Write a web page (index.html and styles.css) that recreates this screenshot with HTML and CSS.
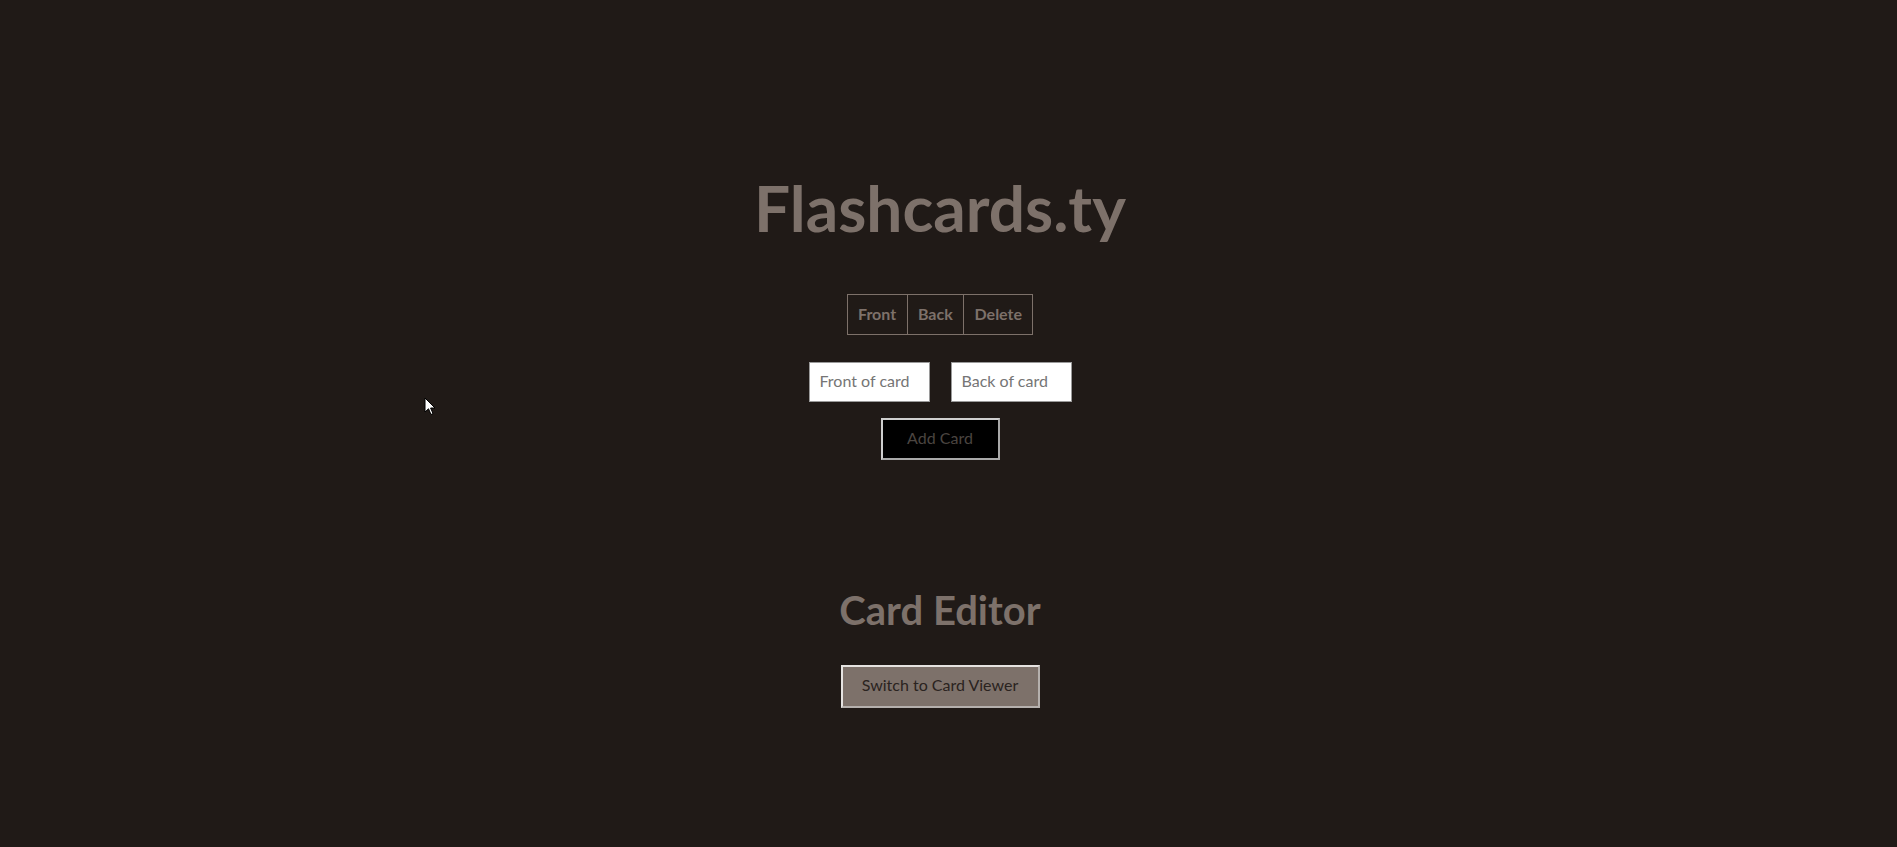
FILE: index.html
```html
<!DOCTYPE html>
<html lang="en">
<head>
<meta charset="utf-8">
<title>Flashcards.ty</title>
<link rel="stylesheet" href="styles.css">
</head>
<body>
<main class="app">
  <h1 class="title">Flashcards.ty</h1>
  <table class="cards">
    <thead>
      <tr><th>Front</th><th>Back</th><th>Delete</th></tr>
    </thead>
  </table>
  <div class="inputs">
    <input class="field" type="text" placeholder="Front of card">
    <input class="field" type="text" placeholder="Back of card">
  </div>
  <button class="add-btn" type="button">Add Card</button>
  <h2 class="subtitle">Card Editor</h2>
  <button class="switch-btn" type="button">Switch to Card Viewer</button>
</main>
<svg class="cursor" width="12" height="19" viewBox="0 0 12 19" aria-hidden="true">
  <path d="M1 1 L1 15 L4.5 11.8 L7 17.5 L9 16.6 L6.6 11 L11 11 Z" fill="#fff" stroke="#000" stroke-width="1"/>
</svg>
</body>
</html>
```

FILE: styles.css
```css
html, body {
  margin: 0;
  padding: 0;
  background: #201a17;
  height: 100%;
}

body {
  font-family: Lato, "Open Sans", sans-serif;
  color: #7d716a;
  overflow: hidden;
}

.app {
  display: flex;
  flex-direction: column;
  align-items: center;
  padding: 170px 17px 0 0;
}

.title {
  margin: 0;
  font-size: 64px;
  font-weight: 700;
  line-height: 1.2;
  color: #7d716a;
}

.cards {
  margin-top: 47px;
  border-collapse: collapse;
}

.cards th {
  border: 1px solid #7d716a;
  padding: 9px 10.4px 11px;
  font-size: 16px;
  font-weight: 700;
  line-height: 19px;
  color: #7d716a;
}

.inputs {
  display: flex;
  gap: 21px;
  margin-top: 27px;
}

.field {
  box-sizing: border-box;
  width: 121px;
  height: 40px;
  padding: 0 10px 3px;
  border: 1px solid #9a9a9a;
  background: #fff;
  font-family: Lato, sans-serif;
  font-size: 16px;
  color: #333;
}

.field::placeholder {
  color: #757575;
}

.add-btn {
  box-sizing: border-box;
  margin-top: 16px;
  width: 119px;
  height: 42px;
  background: #000;
  border: 2px solid #cfcfcf;
  border-bottom-color: #a9a9a9;
  border-right-color: #a9a9a9;
  font-family: Lato, sans-serif;
  font-size: 16px;
  color: #4b4541;
  padding: 0 0 2px;
}

.subtitle {
  margin: 126px 0 0;
  font-size: 40px;
  font-weight: 700;
  line-height: 48px;
  color: #7d716a;
}

.switch-btn {
  box-sizing: border-box;
  margin-top: 31px;
  width: 199px;
  height: 43px;
  padding: 0 0 4px;
  background: #7d716a;
  border: 2px solid #e6e3e1;
  border-bottom-color: #b5b0ad;
  border-right-color: #b5b0ad;
  font-family: Lato, sans-serif;
  font-size: 16px;
  color: #2a2320;
}

.cursor {
  position: absolute;
  left: 424px;
  top: 397px;
}
```
